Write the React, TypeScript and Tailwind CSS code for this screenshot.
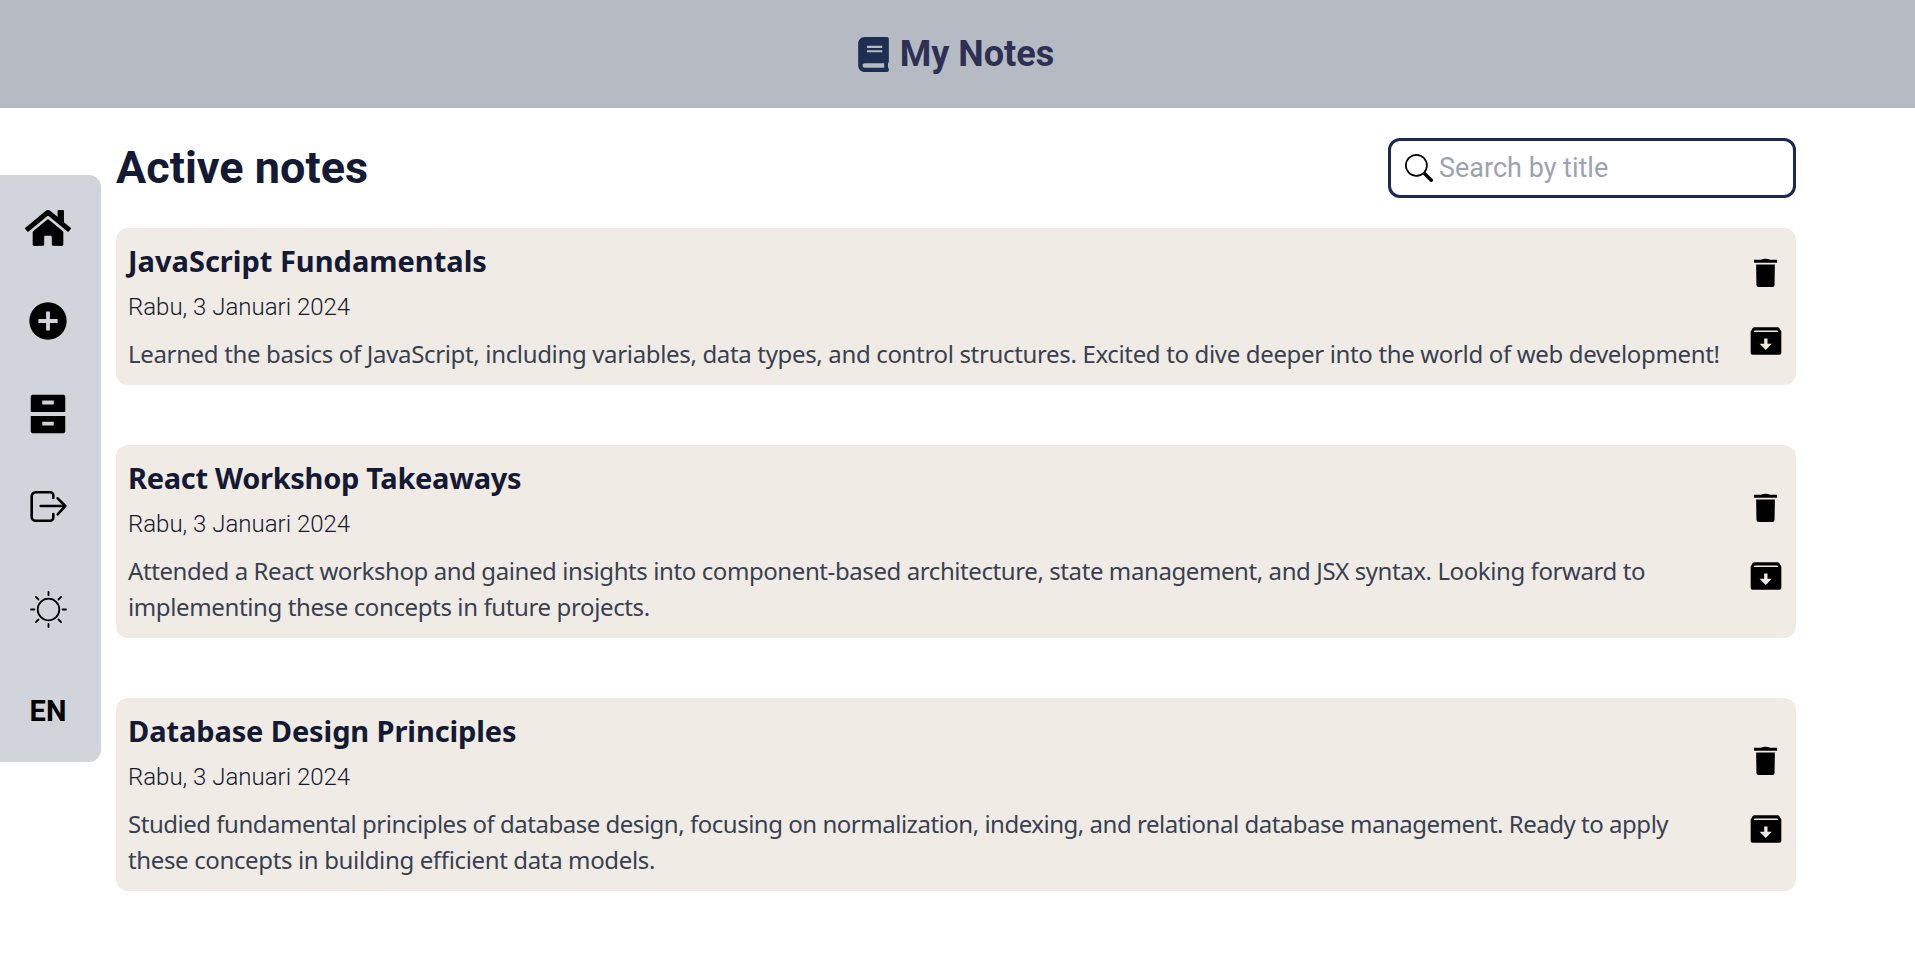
import { FaBook, FaHome } from "react-icons/fa";
import { IoMdAddCircle } from "react-icons/io";
import { RiArchiveDrawerFill } from "react-icons/ri";
import { BsSearch } from "react-icons/bs";

const notes = [
  {
    title: "JavaScript Fundamentals",
    titleClass: "tracking-[0px]",
    lines: [
      { text: "Learned the basics of JavaScript, including variables, data types, and control structures. Excited to dive deeper into the world of web development!", cls: "tracking-[-0.34px]" },
    ],
  },
  {
    title: "React Workshop Takeaways",
    titleClass: "tracking-[-0.3px]",
    lines: [
      { text: "Attended a React workshop and gained insights into component-based architecture, state management, and JSX syntax. Looking forward to", cls: "tracking-[-0.41px]" },
      { text: "implementing these concepts in future projects.", cls: "tracking-[-0.38px]" },
    ],
  },
  {
    title: "Database Design Principles",
    titleClass: "tracking-[-0.1px]",
    lines: [
      { text: "Studied fundamental principles of database design, focusing on normalization, indexing, and relational database management. Ready to apply", cls: "tracking-[-0.48px]" },
      { text: "these concepts in building efficient data models.", cls: "tracking-[-0.36px]" },
    ],
  },
];

function Logout() {
  return (
    <svg className="ml-[2px]" width="38" height="31" viewBox="0 0 38 31" fill="none" stroke="#000" strokeWidth="2.6" strokeLinecap="round" strokeLinejoin="round">
      <path d="M23.3 7V4.3a3 3 0 0 0-3-3H5.7a4 4 0 0 0-4 4v20.4a4 4 0 0 0 4 4h14.6a3 3 0 0 0 3-3V23" />
      <path d="M10.7 15h24.6M27.7 7.3l7.6 7.7-7.6 8.3" />
    </svg>
  );
}

function Sun() {
  return (
    <svg width="37" height="37" viewBox="0 0 37 37" fill="none" stroke="#000" strokeWidth="1.8" strokeLinecap="round">
      <circle cx="18.5" cy="18.5" r="10.8" />
      <path d="M18.5 1v3.2M18.5 32.8V36M1 18.5h3.4M32.6 18.5H36M5.9 5.9l2.6 2.6M28.5 28.5l2.6 2.6M31.1 5.9l-2.6 2.6M8.5 28.5l-2.6 2.6" />
    </svg>
  );
}

function Trash() {
  return (
    <svg className="mr-[1px]" width="23" height="29" viewBox="0 0 67 85" fill="#000">
      <path d="M0 5h20Q33-1 47 5h20v9H0z" />
      <path d="M6 19h55l-1 60q-.5 6-6 6H13q-5.5 0-6-6z" />
    </svg>
  );
}

function ArchiveIn() {
  return (
    <svg width="32" height="28" viewBox="0 0 95 85">
      <path fill="#000" d="M12 1H83Q86 1 88 4L94 14V78Q94 84 88 84H7Q1 84 1 78V14L7 4Q9 1 12 1Z" />
      <path fill="#f0ebe5" d="M13 11H82L85 15H10Z" />
      <path fill="#f0ebe5" d="M42 35H52V51H65L47 70L28 51H42Z" />
    </svg>
  );
}

export default function App() {
  return (
    <div className="min-h-[960px] bg-white font-['Roboto',sans-serif]">
      <header className="h-[108px] bg-[#b5bac3] flex items-center justify-center gap-[9px] pr-[5px]">
        <FaBook className="text-[35px] text-[#1c2f52]" />
        <h1 className="text-[36px] font-bold text-[#2e2f54] leading-none">My Notes</h1>
      </header>
      <div className="relative">
        <aside className="absolute left-0 top-[67px] w-[101px] h-[587px] bg-[#d1d5db] rounded-r-xl flex flex-col items-center pr-[5px]">
          <div className="h-[106px] flex items-center justify-center"><FaHome className="text-[46px] text-black" /></div>
          <div className="h-[80px] flex items-center justify-center"><IoMdAddCircle className="text-[46px] text-black" /></div>
          <div className="h-[106px] flex items-center justify-center"><RiArchiveDrawerFill className="text-[46px] text-black" /></div>
          <div className="h-[78px] flex items-center justify-center"><Logout /></div>
          <div className="h-[128px] flex items-center justify-center"><Sun /></div>
          <div className="h-[78px] flex items-center justify-center text-[29px] font-bold text-black">EN</div>
        </aside>
        <main className="ml-[116px] w-[1680px] pt-[30px]">
          <div className="flex items-center justify-between h-[60px] mb-[30px]">
            <h2 className="text-[45px] font-bold text-[#141a33] leading-none pb-[2px]">Active notes</h2>
            <div className="w-[408px] h-[60px] border-[3px] border-[#1a2857] rounded-xl flex items-center pl-[14px] gap-[6px] bg-white">
              <BsSearch className="text-[28px] text-black" />
              <span className="text-[27px] text-[#9ca3af]">Search by title</span>
            </div>
          </div>
          <div className="flex flex-col gap-[60px]">
            {notes.map((n) => (
              <article key={n.title} className="bg-[#f0ebe5] rounded-xl flex justify-between pl-3 pr-[10px]">
                <div className="pt-[15px] pb-[13px] font-['Noto_Sans',sans-serif]">
                  <h3 className={`text-[29px] font-bold text-[#141a33] leading-[36px] ${n.titleClass}`}>{n.title}</h3>
                  <p className="font-['Roboto',sans-serif] font-light text-[24px] text-[#141a33] leading-[36px] mt-[10px]">Rabu, 3 Januari 2024</p>
                  <div className="text-[24px] text-[#374151] leading-[36px] mt-[11px]">
                    {n.lines.map((l) => <div key={l.text} className={`whitespace-nowrap ${l.cls}`}>{l.text}</div>)}
                  </div>
                </div>
                <div className="flex flex-col items-center justify-center gap-[40px] w-[40px] shrink-0">
                  <Trash />
                  <ArchiveIn />
                </div>
              </article>
            ))}
          </div>
        </main>
      </div>
    </div>
  );
}
